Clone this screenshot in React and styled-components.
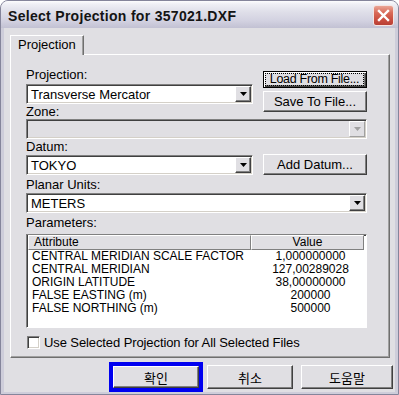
import React from 'react';
import styled, { createGlobalStyle, css } from 'styled-components';

const GlobalStyle = createGlobalStyle`
    * { box-sizing: border-box; }
    html, body { margin: 0; padding: 0; background: #fff; }
    body { font-family: "Liberation Sans", Arial, sans-serif; color: #000; }
`

const raised = css`
    border: 1px solid;
    border-color: #fff #404040 #404040 #fff;
    box-shadow: inset -1px -1px #808080;
`
const sunken = css`
    border: 1px solid;
    border-color: #808080 #fff #fff #808080;
    box-shadow: inset 1px 1px #404040, inset -1px -1px #d4d0c8;
`

const Window = styled.div`
    width: 399px;
    height: 395px;
    display: flex;
    flex-direction: column;
    background: #cecdda;
    border: 1px solid #85859b;
    border-radius: 8px 8px 0 0;
    overflow: hidden;
`
const TitleBar = styled.div`
    height: 27px;
    flex: none;
    display: flex;
    align-items: center;
    justify-content: space-between;
    padding: 2px 4px 0 7px;
    background: linear-gradient(to bottom, #fdfdfe 0%, #efeff5 12%, #dfdfe9 40%, #d3d2e1 72%, #c2c1d3 100%);
`
const Title = styled.div`
    font-size: 14px;
    font-weight: 700;
    letter-spacing: 0.3px;
    color: #141414;
`
const CloseButton = styled.div`
    width: 21px;
    height: 21px;
    margin-top: -1px;
    border-radius: 3px;
    border: 1px solid #f4e4e2;
    background: linear-gradient(to bottom, #eaa596 0%, #d96a58 35%, #c84b3e 75%, #b83f35 100%);
    display: flex;
    align-items: center;
    justify-content: center;
`
const Client = styled.div`
    flex: 1;
    margin: 0 3px 2px 3px;
    background: #e0dfe3;
    padding-top: 7px;
    display: flex;
    flex-direction: column;
`
const TabStrip = styled.div`
    display: flex;
    height: 19px;
    padding-left: 6px;
`
const Tab = styled.div`
    position: relative;
    z-index: 1;
    height: 20px;
    padding: 0 7px;
    background: #e0dfe3;
    border: 1px solid;
    border-color: #fff #6f6f6f transparent #fff;
    border-bottom: none;
    box-shadow: inset -1px 0 #a0a0a0;
    font-size: 13px;
    line-height: 17px;
`
const Panel = styled.div`
    width: 380px;
    height: 304px;
    margin-left: 6px;
    border: 1px solid;
    border-color: #fff #6f6f6f #6f6f6f #fff;
    box-shadow: inset -1px -1px #a0a0a0;
    padding: 12px 22px 0 15px;
    display: flex;
    flex-direction: column;
`
const Row = styled.div`
    display: flex;
    gap: 10px;
    align-items: ${props => props.$align || 'flex-start'};
`
const LeftCol = styled.div`
    width: 227px;
    display: flex;
    flex-direction: column;
`
const RightCol = styled.div`
    width: 104px;
    display: flex;
    flex-direction: column;
    gap: 3px;
    padding-top: ${props => props.$top || 0}px;
`
const Label = styled.div`
    height: 15px;
    font-size: 13px;
    line-height: 15px;
    margin-top: ${props => props.$mt || 0}px;
    white-space: nowrap;
`
const Combo = styled.div`
    height: 20px;
    display: flex;
    padding: 1px;
    margin-top: ${props => props.$mt || 0}px;
    background: ${props => props.$disabled ? '#e0dfe3' : '#fff'};
    ${sunken};
`
const ComboText = styled.div`
    flex: 1;
    padding-left: 3px;
    font-size: 13px;
    line-height: 17px;
    white-space: nowrap;
    overflow: hidden;
`
const DropButton = styled.div`
    width: 16px;
    height: 16px;
    background: #e0dfe3;
    display: flex;
    align-items: center;
    justify-content: center;
    border: 1px solid;
    border-color: ${props => props.$disabled ? '#fff #a0a0a0 #a0a0a0 #fff' : '#fff #404040 #404040 #fff'};
    box-shadow: ${props => props.$disabled ? 'none' : 'inset -1px -1px #808080'};
`
const Button = styled.div`
    width: ${props => props.$w ? props.$w + 'px' : '100%'};
    height: ${props => props.$h}px;
    flex: none;
    background: #e0dfe3;
    display: flex;
    align-items: center;
    justify-content: center;
    font-size: 13px;
    font-family: "Liberation Sans", "Noto Sans CJK KR", sans-serif;
    white-space: nowrap;
    ${raised};
    ${props => props.$default && css`
        border-color: #000;
        box-shadow: inset 1px 1px #fff, inset -1px -1px #404040, inset -2px -2px #808080;
        padding: 1px 2px 2px 1px;
    `}
`
const Focus = styled.span`
    display: block;
    flex: 1;
    border: 1px dotted #000;
    text-align: center;
    font-size: 12.5px;
    line-height: 11px;
    letter-spacing: -0.3px;
`
const ListBox = styled.div`
    height: 94px;
    margin-top: 4px;
    background: #fff;
    border: 1px solid;
    border-color: #808080 #fff #fff #808080;
    box-shadow: inset 1px 1px #404040;
    padding-left: 1px;
`
const Grid = styled.div`
    display: grid;
    grid-template-columns: 223px 113px;
`
const HeadCell = styled.div`
    height: 15px;
    background: #e0dfe3;
    font-size: 12px;
    line-height: 13px;
    padding-left: ${props => props.$center ? 0 : 5}px;
    text-align: ${props => props.$center ? 'center' : 'left'};
    border: 1px solid;
    border-color: #fff #808080 #808080 #fff;
`
const Cell = styled.div`
    font-size: 12px;
    line-height: 13px;
    white-space: nowrap;
    padding-left: ${props => props.$center ? 6 : 4}px;
    text-align: ${props => props.$center ? 'center' : 'left'};
`
const CheckRow = styled.label`
    display: flex;
    align-items: center;
    gap: 4px;
    margin-top: 8px;
    padding-left: 1px;
    font-size: 13px;
    line-height: 13px;
    letter-spacing: -0.1px;
`
const CheckBox = styled.span`
    width: 13px;
    height: 13px;
    background: #fff;
    ${sunken};
`
const BottomBar = styled.div`
    height: 30px;
    margin-top: 4px;
    display: flex;
    align-items: center;
    justify-content: flex-end;
    padding-right: 2px;
`
const OkFrame = styled.div`
    width: 94px;
    height: 30px;
    border: 4px solid #0000f0;
    margin-right: 4px;
`
const Spacer = styled.div`
    width: 8px;
`

const Arrow = ({ disabled }) => (
    <svg width="7" height="4" viewBox="0 0 7 4">
        <polygon points="0,0 7,0 3.5,4" fill={disabled ? '#a0a0a0' : '#000'} />
    </svg>
)

const Select = ({ value, disabled, mt }) => (
    <Combo $disabled={disabled} $mt={mt}>
        <ComboText>{value}</ComboText>
        <DropButton $disabled={disabled}><Arrow disabled={disabled} /></DropButton>
    </Combo>
)

const params = [
    ['CENTRAL MERIDIAN SCALE FACTOR', '1,000000000'],
    ['CENTRAL MERIDIAN', '127,00289028'],
    ['ORIGIN LATITUDE', '38,00000000'],
    ['FALSE EASTING (m)', '200000'],
    ['FALSE NORTHING (m)', '500000'],
]

const App = () => {
    return (
        <>
            <GlobalStyle />
            <Window>
                <TitleBar>
                    <Title>Select Projection for 357021.DXF</Title>
                    <CloseButton>
                        <svg width="13" height="13" viewBox="0 0 13 13">
                            <path d="M2 2 L11 11 M11 2 L2 11" stroke="#fff" strokeWidth="2.4" strokeLinecap="square" />
                        </svg>
                    </CloseButton>
                </TitleBar>
                <Client>
                    <TabStrip>
                        <Tab>Projection</Tab>
                    </TabStrip>
                    <Panel>
                        <Row>
                            <LeftCol>
                                <Label>Projection:</Label>
                                <Select value="Transverse Mercator" mt={2} />
                                <Label>Zone:</Label>
                            </LeftCol>
                            <RightCol $top={4}>
                                <Button $h={17} $default><Focus>Load From File...</Focus></Button>
                                <Button $h={21}>Save To File...</Button>
                            </RightCol>
                        </Row>
                        <Select value="" disabled />
                        <Row $align="flex-end">
                            <LeftCol>
                                <Label>Datum:</Label>
                                <Select value="TOKYO" mt={1} />
                            </LeftCol>
                            <RightCol>
                                <Button $h={21}>Add Datum...</Button>
                            </RightCol>
                        </Row>
                        <Label $mt={2}>Planar Units:</Label>
                        <Select value="METERS" mt={1} />
                        <Label $mt={2}>Parameters:</Label>
                        <ListBox>
                            <Grid>
                                <HeadCell>Attribute</HeadCell>
                                <HeadCell $center>Value</HeadCell>
                                {params.map(([name, value]) => (
                                    <React.Fragment key={name}>
                                        <Cell>{name}</Cell>
                                        <Cell $center>{value}</Cell>
                                    </React.Fragment>
                                ))}
                            </Grid>
                        </ListBox>
                        <CheckRow>
                            <CheckBox />
                            Use Selected Projection for All Selected Files
                        </CheckRow>
                    </Panel>
                    <BottomBar>
                        <OkFrame>
                            <Button $h={22}>확인</Button>
                        </OkFrame>
                        <Button $w={86} $h={24}>취소</Button>
                        <Spacer />
                        <Button $w={92} $h={24}>도움말</Button>
                    </BottomBar>
                </Client>
            </Window>
        </>
    );
}

export default App;
